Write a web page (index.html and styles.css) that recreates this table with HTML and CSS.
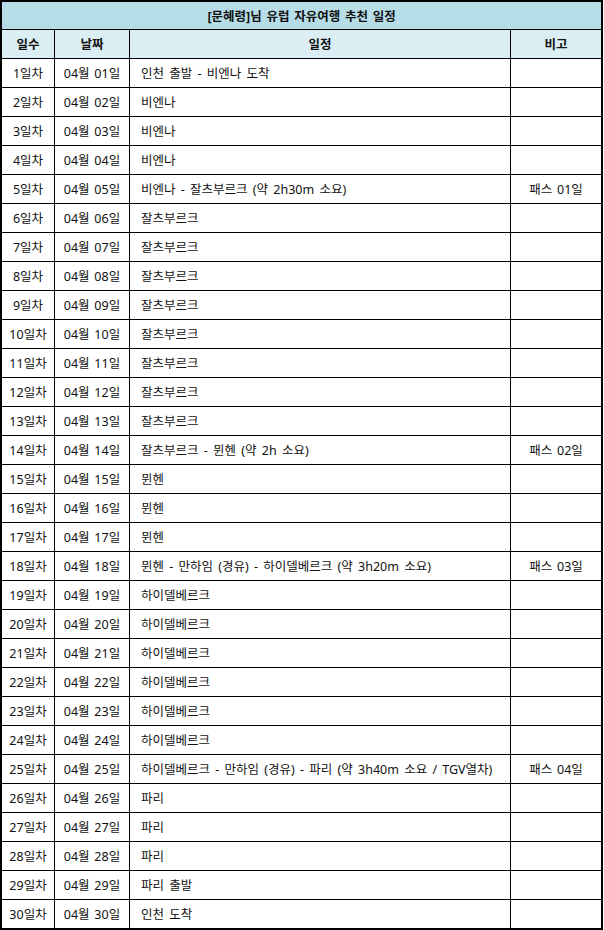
FILE: index.html
```html
<!DOCTYPE html>
<html lang="ko">
<head>
<meta charset="utf-8">
<title>유럽 자유여행 추천 일정</title>
<link rel="stylesheet" href="styles.css">
</head>
<body>
<table class="plan">
  <colgroup>
    <col class="c-day">
    <col class="c-date">
    <col class="c-plan">
    <col class="c-note">
  </colgroup>
  <thead>
    <tr class="title-row"><th colspan="4">[문혜령]님 유럽 자유여행 추천 일정</th></tr>
    <tr class="head-row"><th>일수</th><th>날짜</th><th>일정</th><th class="last">비고</th></tr>
  </thead>
  <tbody>
    <tr><td>1일차</td><td>04월 01일</td><td class="plan-text">인천 출발 - 비엔나 도착</td><td class="last"></td></tr>
    <tr><td>2일차</td><td>04월 02일</td><td class="plan-text">비엔나</td><td class="last"></td></tr>
    <tr><td>3일차</td><td>04월 03일</td><td class="plan-text">비엔나</td><td class="last"></td></tr>
    <tr><td>4일차</td><td>04월 04일</td><td class="plan-text">비엔나</td><td class="last"></td></tr>
    <tr><td>5일차</td><td>04월 05일</td><td class="plan-text">비엔나 - 잘츠부르크 (약 2h30m 소요)</td><td class="last">패스 01일</td></tr>
    <tr><td>6일차</td><td>04월 06일</td><td class="plan-text">잘츠부르크</td><td class="last"></td></tr>
    <tr><td>7일차</td><td>04월 07일</td><td class="plan-text">잘츠부르크</td><td class="last"></td></tr>
    <tr><td>8일차</td><td>04월 08일</td><td class="plan-text">잘츠부르크</td><td class="last"></td></tr>
    <tr><td>9일차</td><td>04월 09일</td><td class="plan-text">잘츠부르크</td><td class="last"></td></tr>
    <tr><td>10일차</td><td>04월 10일</td><td class="plan-text">잘츠부르크</td><td class="last"></td></tr>
    <tr><td>11일차</td><td>04월 11일</td><td class="plan-text">잘츠부르크</td><td class="last"></td></tr>
    <tr><td>12일차</td><td>04월 12일</td><td class="plan-text">잘츠부르크</td><td class="last"></td></tr>
    <tr><td>13일차</td><td>04월 13일</td><td class="plan-text">잘츠부르크</td><td class="last"></td></tr>
    <tr><td>14일차</td><td>04월 14일</td><td class="plan-text">잘츠부르크 - 뮌헨 (약 2h 소요)</td><td class="last">패스 02일</td></tr>
    <tr><td>15일차</td><td>04월 15일</td><td class="plan-text">뮌헨</td><td class="last"></td></tr>
    <tr><td>16일차</td><td>04월 16일</td><td class="plan-text">뮌헨</td><td class="last"></td></tr>
    <tr><td>17일차</td><td>04월 17일</td><td class="plan-text">뮌헨</td><td class="last"></td></tr>
    <tr><td>18일차</td><td>04월 18일</td><td class="plan-text">뮌헨 - 만하임 (경유) - 하이델베르크 (약 3h20m 소요)</td><td class="last">패스 03일</td></tr>
    <tr><td>19일차</td><td>04월 19일</td><td class="plan-text">하이델베르크</td><td class="last"></td></tr>
    <tr><td>20일차</td><td>04월 20일</td><td class="plan-text">하이델베르크</td><td class="last"></td></tr>
    <tr><td>21일차</td><td>04월 21일</td><td class="plan-text">하이델베르크</td><td class="last"></td></tr>
    <tr><td>22일차</td><td>04월 22일</td><td class="plan-text">하이델베르크</td><td class="last"></td></tr>
    <tr><td>23일차</td><td>04월 23일</td><td class="plan-text">하이델베르크</td><td class="last"></td></tr>
    <tr><td>24일차</td><td>04월 24일</td><td class="plan-text">하이델베르크</td><td class="last"></td></tr>
    <tr><td>25일차</td><td>04월 25일</td><td class="plan-text">하이델베르크 - 만하임 (경유) - 파리 (약 3h40m 소요 / TGV열차)</td><td class="last">패스 04일</td></tr>
    <tr><td>26일차</td><td>04월 26일</td><td class="plan-text">파리</td><td class="last"></td></tr>
    <tr><td>27일차</td><td>04월 27일</td><td class="plan-text">파리</td><td class="last"></td></tr>
    <tr><td>28일차</td><td>04월 28일</td><td class="plan-text">파리</td><td class="last"></td></tr>
    <tr><td>29일차</td><td>04월 29일</td><td class="plan-text">파리 출발</td><td class="last"></td></tr>
    <tr class="final"><td>30일차</td><td>04월 30일</td><td class="plan-text">인천 도착</td><td class="last"></td></tr>
  </tbody>
</table>
</body>
</html>
```

FILE: styles.css
```css
html, body {
  margin: 0;
  padding: 0;
  background: #ffffff;
}

body {
  font-family: "Noto Sans", "Noto Sans CJK KR", sans-serif;
  font-size: 12.5px;
  color: #111111;
}

.plan {
  width: 603px;
  table-layout: fixed;
  border-collapse: separate;
  border-spacing: 0;
  border: 2px solid #000000;
}

.c-day { width: 53px; }
.c-date { width: 75px; }
.c-plan { width: 381px; }
.c-note { width: 90px; }

.plan th,
.plan td {
  box-sizing: border-box;
  padding: 2px 0 0 0;
  border-right: 1px solid #000000;
  border-bottom: 1px solid #000000;
  text-align: center;
  vertical-align: middle;
  line-height: 16px;
  white-space: nowrap;
  word-spacing: 1.5px;
  height: 29px;
}

.plan .last {
  border-right: none;
}

.title-row th {
  background: #b7dde8;
  font-weight: bold;
  border-right: none;
  height: 28px;
}

.head-row th {
  background: #daeef3;
  font-weight: bold;
}

.plan td.plan-text {
  text-align: left;
  padding-left: 11px;
  word-spacing: 2px;
}

.plan .final td {
  border-bottom: none;
  height: 28px;
}
```
